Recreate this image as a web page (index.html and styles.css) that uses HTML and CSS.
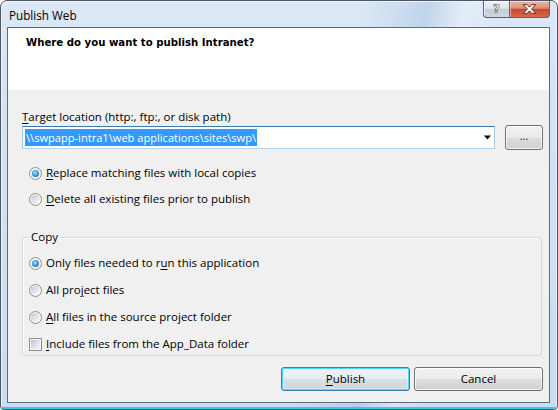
FILE: index.html
```html
<!DOCTYPE html>
<html>
<head>
<meta charset="utf-8">
<title>Publish Web</title>
<link rel="stylesheet" href="styles.css">
</head>
<body>
<div class="window">
  <div class="titlebar">
    <span class="title">Publish Web</span>
    <div class="caption">
      <div class="cbtn help"><span class="qmark">?</span></div>
      <div class="cbtn close">
        <svg width="40" height="16" viewBox="0 0 40 16"><path d="M13.5 3.5h4l2.5 2.6 2.5-2.6h4l-4.4 4.5 4.4 4.5h-4l-2.5-2.6-2.5 2.6h-4l4.4-4.5z" fill="#fff" stroke="#5a2a20" stroke-width="1" stroke-linejoin="round"/></svg>
      </div>
    </div>
  </div>
  <div class="client">
    <div class="header">
      <h1 class="heading">Where do you want to publish Intranet?</h1>
    </div>
    <div class="content">
      <div class="field-label"><u>T</u>arget location (http:, ftp:, or disk path)</div>
      <div class="location-row">
        <div class="combo">
          <span class="sel">\\swpapp-intra1\web applications\sites\swp\</span>
          <svg class="arrow" width="7" height="5" viewBox="0 0 7 5"><path d="M0 0.5h7L3.5 4.5z" fill="#000"/></svg>
        </div>
        <div class="btn browse">...</div>
      </div>
      <div class="options">
        <div class="opt"><span class="radio checked"></span><span><u>R</u>eplace matching files with local copies</span></div>
        <div class="opt"><span class="radio"></span><span><u>D</u>elete all existing files prior to publish</span></div>
      </div>
      <fieldset class="group">
        <legend>Copy</legend>
        <div class="group-list">
          <div class="opt"><span class="radio checked"></span><span>Only files needed to r<u>u</u>n this application</span></div>
          <div class="opt"><span class="radio"></span><span>All pro<u>j</u>ect files</span></div>
          <div class="opt"><span class="radio"></span><span><u>A</u>ll files in the source project folder</span></div>
          <div class="opt"><span class="check"></span><span><u>I</u>nclude files from the App_Data folder</span></div>
        </div>
      </fieldset>
      <div class="actions">
        <div class="btn primary"><span><u>P</u>ublish</span></div>
        <div class="btn"><span>Cancel</span></div>
      </div>
    </div>
  </div>
</div>
</body>
</html>
```

FILE: styles.css
```css
* { box-sizing: border-box; }
html, body { margin: 0; padding: 0; }
body {
  width: 558px;
  height: 410px;
  overflow: hidden;
  background: #ffffff;
  font-family: "Open Sans", "Noto Sans", sans-serif;
  font-size: 11.5px;
  color: #000;
}
u { text-decoration: underline; text-underline-offset: 2px; }

.window {
  width: 558px;
  height: 410px;
  border: 1px solid #4c5664;
  border-radius: 7px 7px 4px 4px;
  padding: 0 7px 6px 6px;
  display: flex;
  flex-direction: column;
  background:
    linear-gradient(100deg, rgba(255,255,255,0) 58%, rgba(160,190,222,0.45) 68%, rgba(255,255,255,0.25) 74%, rgba(255,255,255,0) 80%),
    linear-gradient(180deg, #dbe8f6 0%, #d2e3f4 30%, #cadcf0 100%);
  box-shadow: inset 1px 1px 0 #eef5fc, inset -1px 0 0 #e6f0fa, inset 0 -2px 0 #3cc3ef;
}

.titlebar {
  height: 26px;
  display: flex;
  justify-content: space-between;
  align-items: flex-start;
  flex-shrink: 0;
}
.title {
  margin: 6px 0 0 2px;
  line-height: 16px;
  font-family: "Open Sans", "Noto Sans", sans-serif;
  font-size: 11.7px;
}
.caption { display: flex; margin-right: 0; }
.cbtn {
  height: 17px;
  border: 1px solid #5a636e;
  border-top: none;
  display: flex;
  align-items: center;
  justify-content: center;
}
.help {
  width: 26px;
  border-right: none;
  border-radius: 0 0 0 4px;
  background: linear-gradient(180deg, #f1f4f8 0%, #dfe5ec 45%, #c3ceda 52%, #cdd7e2 100%);
  box-shadow: inset 1px 1px 0 rgba(255,255,255,0.7);
}
.qmark {
  font-family: "DejaVu Sans", sans-serif;
  font-weight: bold;
  font-size: 12px;
  line-height: 14px;
  color: #fff;
  -webkit-text-stroke: 0.6px #505862;
}
.close {
  width: 41px;
  border-radius: 0 0 4px 0;
  background: linear-gradient(180deg, #edb9a9 0%, #dd8f77 45%, #c8472e 52%, #d56a4f 100%);
  box-shadow: inset 1px 1px 0 rgba(255,255,255,0.45);
}
.close svg { display: block; }

.client {
  flex: 1;
  border: 1px solid #5f6c7b;
  background: #f0f0f0;
  display: flex;
  flex-direction: column;
  min-height: 0;
}
.header {
  height: 62px;
  background: #fff;
  padding: 7px 0 0 18px;
  flex-shrink: 0;
}
.heading {
  margin: 0;
  font-family: "DejaVu Sans Condensed", "DejaVu Sans", sans-serif;
  font-weight: bold;
  font-size: 11.3px;
  line-height: 16px;
}

.content {
  flex: 1;
  display: flex;
  flex-direction: column;
  padding: 0 6px 0 14px;
}
.field-label {
  margin-top: 19px;
  line-height: 16px;
}
.location-row {
  display: flex;
  align-items: center;
  gap: 10px;
  height: 25px;
}
.combo {
  flex: 1;
  height: 23px;
  background: #fff;
  border: 1px solid;
  border-color: #3d7bad #a9cbe6 #b6d5ee #a9cbe6;
  display: flex;
  align-items: center;
  justify-content: space-between;
  padding: 0 3px 0 2px;
  font-size: 11.1px;
}
.sel {
  background: #3399ff;
  color: #fff;
  line-height: 17px;
  padding: 0 1px;
  white-space: pre;
}
.arrow { display: block; }

.btn {
  height: 24px;
  border: 1px solid #707070;
  border-radius: 3px;
  background: linear-gradient(180deg, #f2f2f2 0%, #ebebeb 48%, #dddddd 52%, #cfcfcf 100%);
  box-shadow: inset 0 0 0 1px rgba(255,255,255,0.75);
  display: flex;
  align-items: center;
  justify-content: center;
  line-height: 16px;
}
.browse {
  width: 38px;
  height: 25px;
  color: #1b2a6b;
  font-size: 11px;
  padding-bottom: 3px;
}

.options { margin-top: 10px; }
.opt {
  display: flex;
  align-items: center;
  gap: 4px;
  height: 26px;
  padding-left: 7px;
  line-height: 16px;
}
.radio {
  width: 13px;
  height: 13px;
  border-radius: 50%;
  border: 1px solid #8c8e90;
  background: #f7f7f7;
  display: flex;
  align-items: center;
  justify-content: center;
  flex-shrink: 0;
}
.radio::after {
  content: "";
  width: 9px;
  height: 9px;
  border-radius: 50%;
  background: linear-gradient(135deg, #c3c6ca 0%, #e6e7e9 55%, #fbfbfb 100%);
}
.radio.checked::after {
  width: 7px;
  height: 7px;
  background: radial-gradient(circle at 45% 40%, #b4e8ff 0%, #47a6e6 40%, #12507f 100%);
  box-shadow: 0 0 0 1px #e9ecef;
}
.check {
  width: 13px;
  height: 13px;
  border: 1px solid #8c8e90;
  background: #f4f4f4;
  display: flex;
  align-items: center;
  justify-content: center;
  flex-shrink: 0;
}
.check::after {
  content: "";
  width: 9px;
  height: 9px;
  background: linear-gradient(135deg, #b9bdc3 0%, #dfe1e4 50%, #f8f8f8 100%);
}

.group {
  margin: 17px 1px 0 0;
  padding: 0 0 0 6px;
  border: 1px solid #d3dbe0;
  border-radius: 3px;
  box-shadow: inset 1px 1px 0 #fff;
  min-width: 0;
}
.group legend {
  padding: 0 2px;
  margin: 0;
  line-height: 16px;
}
.group-list {
  display: flex;
  flex-direction: column;
  gap: 5px;
  padding-top: 7px;
}
.group .opt {
  height: 22px;
  padding-left: 0;
}

.actions {
  margin-top: 11px;
  display: flex;
  justify-content: flex-end;
  gap: 4px;
}
.actions .btn { width: 129px; }
.btn.primary {
  border-color: #3c7fb1;
  box-shadow: inset 0 0 0 1px #4ed7fc, inset 0 0 0 2px rgba(255,255,255,0.4);
  background: linear-gradient(180deg, #eef4f8 0%, #e6edf2 48%, #d7e0e6 52%, #cdd5db 100%);
}
```
